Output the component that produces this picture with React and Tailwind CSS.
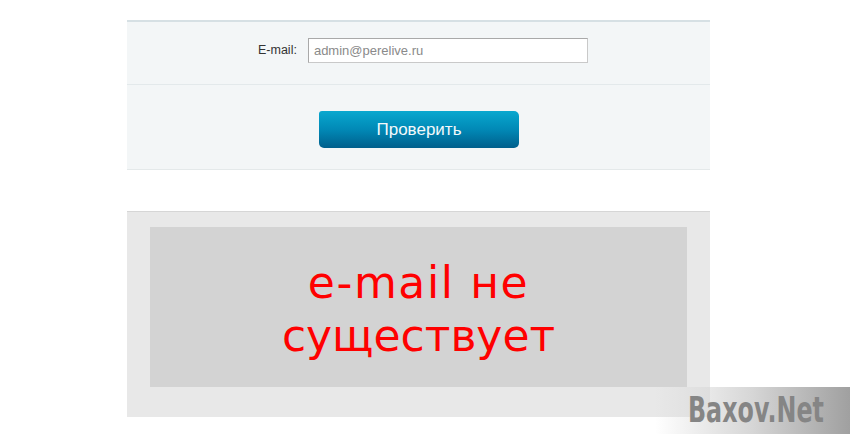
export default function App() {
  return (
    <div className="relative w-[850px] h-[434px] bg-white overflow-hidden" style={{ fontFamily: '"Liberation Sans", Arial, sans-serif' }}>
      <div className="ml-[127px] w-[583px] pt-[20px]">
        <div className="bg-[#f3f6f7] border-t-2 border-[#d6e0e4] border-b border-b-[#e4e9ea]">
          <div className="h-[63px] flex items-start pt-[16px] pl-[131px] border-b border-[#e3e9eb]">
            <label className="text-[12.5px] text-[#333] mt-[5px] mr-[11px] leading-[14px]">E-mail:</label>
            <div className="w-[280px] h-[25px] bg-white border border-[#c9c9c9] border-t-[#a9a9a9] border-l-[#a9a9a9] flex items-center px-[5px] text-[13px] text-[#8a8a8a]">
              admin@perelive.ru
            </div>
          </div>
          <div className="h-[84px] pt-[26px] pl-[192px]">
            <button className="w-[200px] h-[37px] rounded-[5px] rounded-tl-[3px] bg-gradient-to-b from-[#0aa8cf] via-[#0189b6] to-[#005f8c] text-[#f4f9fb] text-[17px] flex items-center justify-center">
              Проверить
            </button>
          </div>
        </div>
        <div className="mt-[41px] bg-[#e8e8e8] border-t border-[#d6d6d6] px-[23px] pt-[15px] pb-[30px]">
          <div className="h-[160px] bg-[#d3d3d3] flex flex-col items-center justify-center text-[#ff0000] text-[44px] leading-[53px] pt-[4px]" style={{ fontFamily: '"DejaVu Sans", Verdana, sans-serif' }}>
            <div className="tracking-[1.6px]">e-mail не</div>
            <div>существует</div>
          </div>
        </div>
      </div>
      <div className="absolute right-0 bottom-0 w-[195px] h-[47px] bg-gradient-to-r from-[#ffffff00] via-[#d6d6d6] to-[#a0a0a0] flex items-center justify-end pr-[26px]">
        <span className="block text-[35px] leading-[35px] font-bold text-[#858585] scale-x-[0.68] origin-right" style={{ fontFamily: '"DejaVu Sans", sans-serif' }}>Baxov.Net</span>
      </div>
    </div>
  );
}
